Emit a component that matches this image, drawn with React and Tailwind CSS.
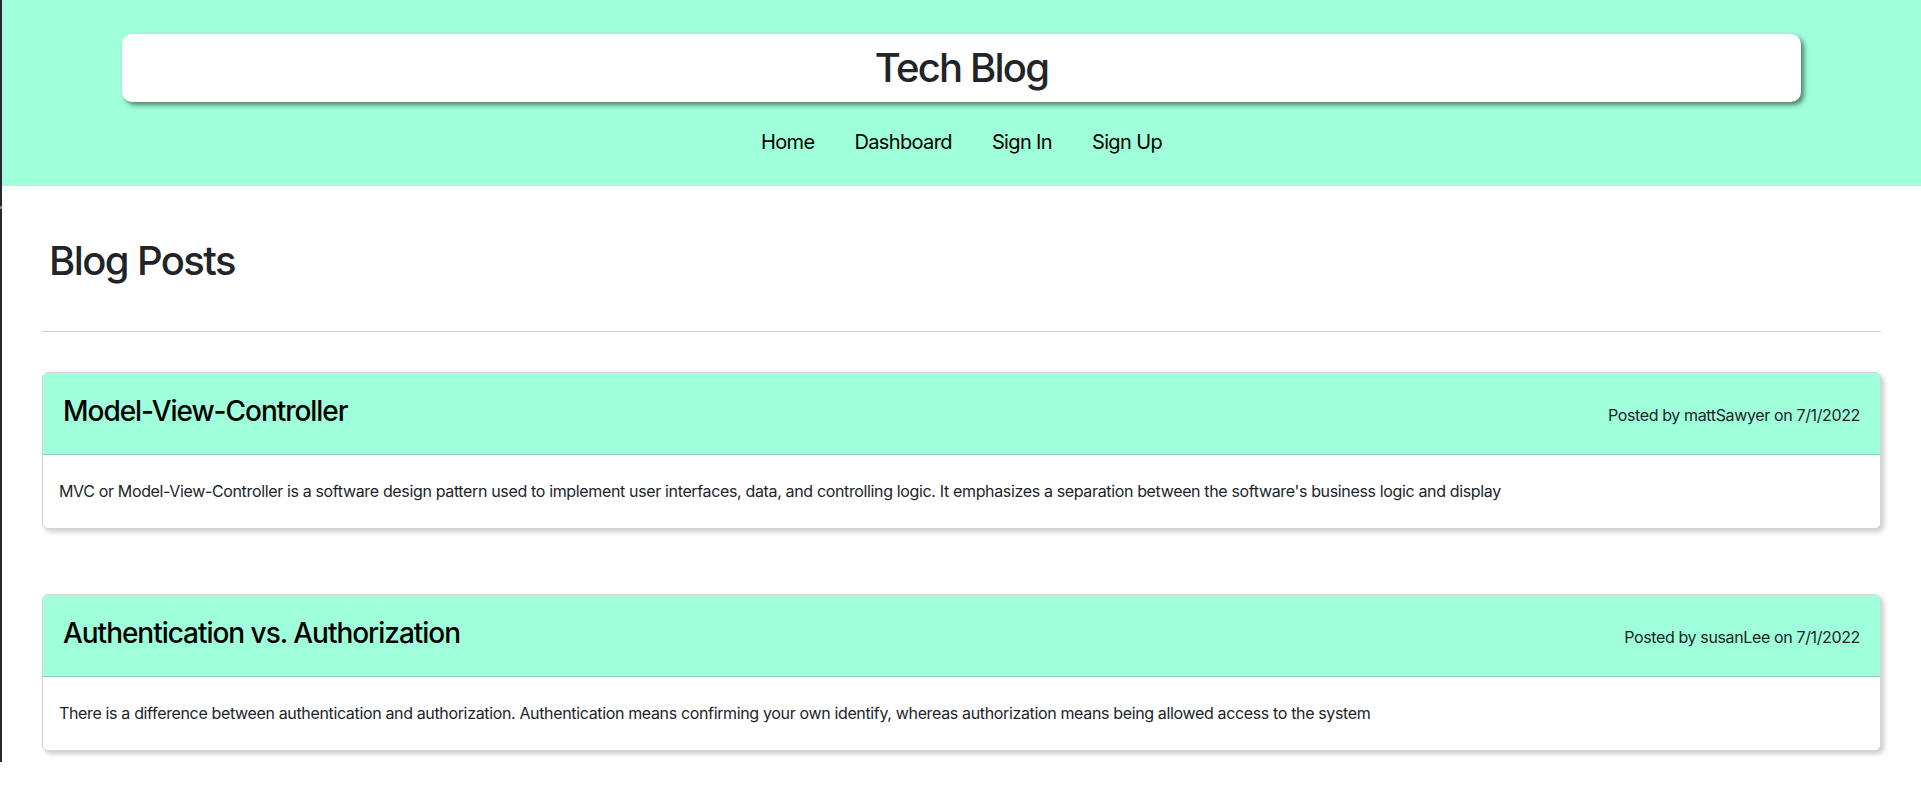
import React from "react";

const posts = [
  {
    title: "Model-View-Controller",
    author: "mattSawyer",
    date: "7/1/2022",
    body: "MVC or Model-View-Controller is a software design pattern used to implement user interfaces, data, and controlling logic. It emphasizes a separation between the software's business logic and display",
  },
  {
    title: "Authentication vs. Authorization",
    author: "susanLee",
    date: "7/1/2022",
    body: "There is a difference between authentication and authorization. Authentication means confirming your own identify, whereas authorization means being allowed access to the system",
  },
];

function PostCard({ post, className }) {
  return (
    <div
      className={
        "border border-[#d3d3d3] rounded-[6px] overflow-hidden bg-white shadow-[3px_3px_5px_rgba(0,0,0,0.2)] " +
        (className || "")
      }
    >
      <div className="bg-[#9effda] border-b border-[#82d6b6] flex justify-between items-baseline pl-[20px] pr-[20px] pt-[21px] pb-[26px]">
        <h3 className="text-[28px] leading-[34px] font-medium text-black tracking-[-0.037em]">
          {post.title}
        </h3>
        <p className="text-[16px] leading-[24px] text-[#212529] tracking-[-0.023em]">
          Posted by {post.author} on {post.date}
        </p>
      </div>
      <div className="px-[16px] pt-[24px] pb-[25px]">
        <p className="text-[16px] leading-[24px] text-[#212529] tracking-[-0.022em]">{post.body}</p>
      </div>
    </div>
  );
}

export default function App() {
  return (
    <div
      className="flex min-h-[808px] bg-white"
      style={{ fontFamily: 'Inter, "Liberation Sans", sans-serif' }}
    >
      <div className="w-[2px] h-[762px] shrink-0 bg-[#26282d] flex flex-col">
        <div className="h-[206px]" />
        <div className="h-[3px] bg-[#7d828c]" />
      </div>
      <div className="flex-1 min-w-0">
        <header className="bg-[#9effda] h-[186px] pt-[34px] flex flex-col items-center">
          <div className="self-stretch mx-[120px] h-[68px] bg-white rounded-[10px] shadow-[3px_3px_5px_rgba(0,0,0,0.5)] flex items-center justify-center">
            <h1 className="text-[40px] leading-[48px] font-medium text-[#212529] tracking-[-0.045em]">
              Tech Blog
            </h1>
          </div>
          <nav className="mt-[26px] flex gap-[40px] text-[20px] leading-[28px] text-black tracking-[-0.032em]">
            <a>Home</a>
            <a>Dashboard</a>
            <a>Sign In</a>
            <a>Sign Up</a>
          </nav>
        </header>
        <main className="px-[40px]">
          <h1 className="mt-[51px] pl-[7px] text-[40px] leading-[48px] font-medium text-[#212529] tracking-[-0.04em]">
            Blog Posts
          </h1>
          <hr className="mt-[46px] border-0 border-t border-[#cecece]" />
          <PostCard post={posts[0]} className="mt-[40px]" />
          <PostCard post={posts[1]} className="mt-[65px]" />
        </main>
      </div>
    </div>
  );
}
